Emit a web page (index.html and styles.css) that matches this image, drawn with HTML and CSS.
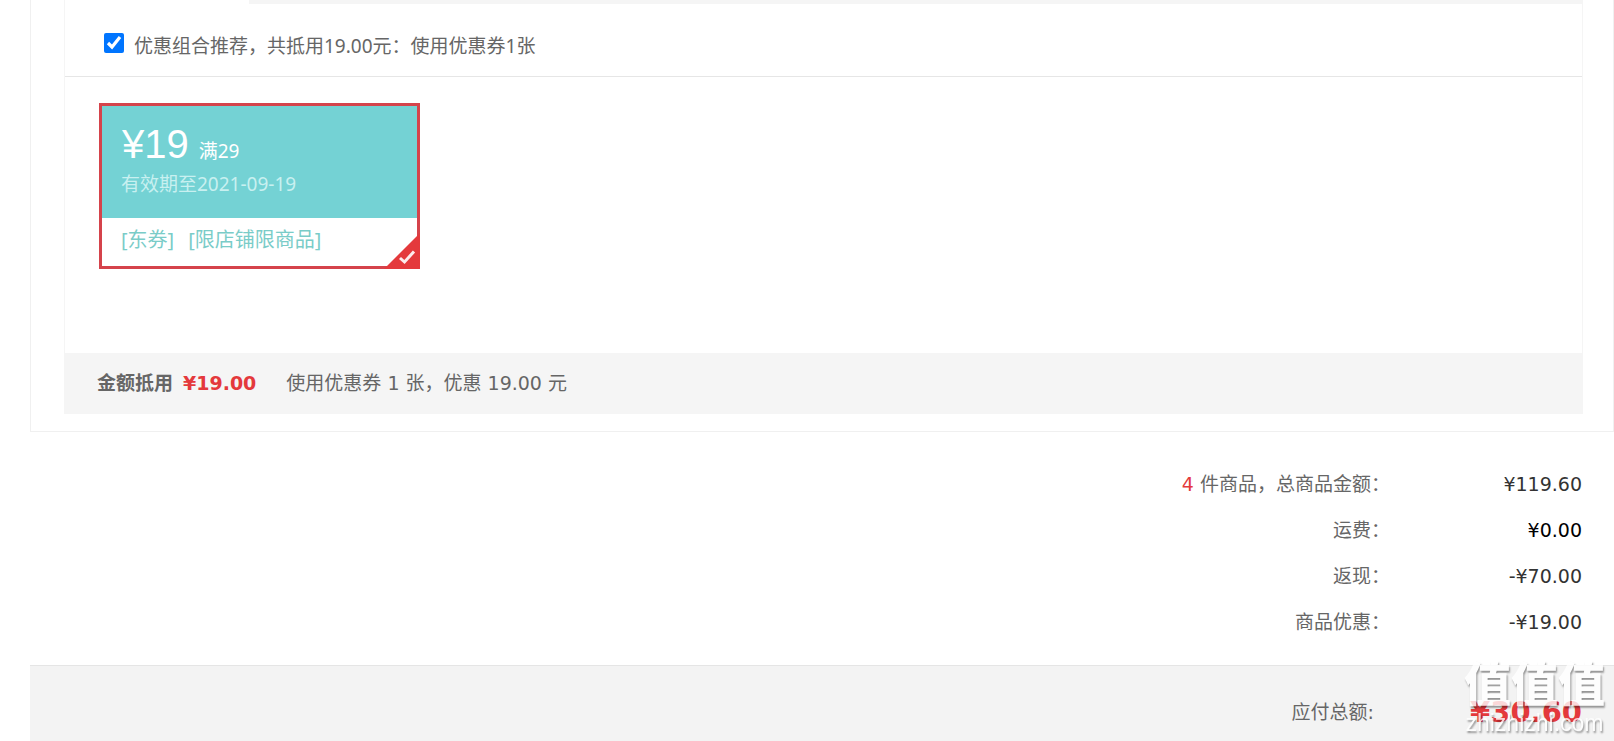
FILE: index.html
```html
<!DOCTYPE html>
<html lang="zh-CN">
<head>
<meta charset="utf-8" />
<title>结算页</title>
<meta name="viewport" content="width=device-width,initial-scale=1.0"/>
<link rel="stylesheet" href="styles.css">
</head>
<body>

<div class="virtual-box">
<div class="coupon-panel">
<div class="tab-line"></div>

<div class="recommend">
<input type="checkbox" id="best_coupon" checked />
<label for="best_coupon">优惠组合推荐，共抵用19.00元：使用优惠券1张</label>
</div>

<div class="coupon-list">
<div class="coupon">
<div class="coupon-top">
<div class="price"><strong>¥19</strong><span>满29</span></div>
<div class="date">有效期至2021-09-19</div>
</div>
<div class="coupon-type"><span>[东券]</span><span>[限店铺限商品]</span></div>
<svg class="selected" viewBox="0 0 36 36">
<path d="M36 0V36H0Z" fill="#e4393c"/>
<path d="M16 25L20.500 29L30 18.500" fill="none" stroke="#fff" stroke-opacity="0.900" stroke-width="3"/>
</svg>
</div>
</div>

<div class="coupon-total">
<b>金额抵用</b>
<b class="red">¥19.00</b>
<span class="used">使用优惠券 1 张，优惠 19.00 元</span>
</div>
</div>
</div>

<dl class="order-summary">
<div class="line"><dt><em>4</em> 件商品，总商品金额：</dt><dd>¥119.60</dd></div>
<div class="line"><dt>运费：</dt><dd class="freight">¥0.00</dd></div>
<div class="line"><dt>返现：</dt><dd>-¥70.00</dd></div>
<div class="line"><dt>商品优惠：</dt><dd>-¥19.00</dd></div>
</dl>

<div class="pay-bar">
<span class="pay-label">应付总额:</span>
<strong class="pay-price">¥30.60</strong>
</div>

<div class="watermark">
<div class="wm-name">值值值</div>
<div class="wm-url">zhizhizhi.com</div>
</div>

</body>
</html>
```
FILE: styles.css
```css
* {
     box-sizing:border-box;
}
body {
     margin:0;
     padding-left:30px;
     min-height:100vh;
     display:flex;
     flex-direction:column;
     font:400 19px/24px "Noto Sans","Noto Sans CJK SC",sans-serif;
     color:#666666;
     background:#ffffff;
}

/* coupons */
.virtual-box {
     padding:0 30px 17px 33px;
     border:1px solid #f0f0f0;
     border-top:0;
}
.coupon-panel {
     border:1px solid #f5f5f5;
     border-width:0 1px;
}
.tab-line {
     height:4px;
     margin-left:184px;
     background:#f5f5f5;
}
.recommend {
     display:flex;
     align-items:center;
     gap:10px;
     height:73px;
     padding:12px 0 0 39px;
     border-bottom:1px solid #e6e6e6;
}
.recommend input {
     width:20px;
     height:20px;
     margin:0 0 6px;
}
.coupon-list {
     height:276px;
     padding:26px 34px;
}
.coupon {
     position:relative;
     width:321px;
     border:3px solid #d5434b;
     background:#ffffff;
}
.coupon-top {
     height:112px;
     padding:15px 19px;
     color:#ffffff;
     background:#74d2d4;
}
.price {
     display:flex;
     align-items:baseline;
     gap:10px;
     height:51px;
     padding-left:1px;
     line-height:46px;
}
.price strong {
     font-family:"Liberation Sans",Arial,sans-serif;
     font-size:40px;
     font-weight:400;
}
.date {
     color:#c8f0f0;
}
.coupon-type {
     display:flex;
     gap:14px;
     height:48px;
     padding:10px 19px;
     font-size:20px;
     color:#7accc8;
}
.selected {
     position:absolute;
     right:-3px;
     bottom:-3px;
     width:36px;
     height:36px;
}
.coupon-total {
     display:flex;
     align-items:center;
     gap:10px;
     height:61px;
     padding:0 32px 2px;
     font-family:"DejaVu Sans",Verdana,"Noto Sans CJK SC",sans-serif;
     background:#f5f5f5;
}
.coupon-total b {
     font-weight:700;
}
.red {
     color:#e4393c;
}
.used {
     margin-left:20px;
}

/* amounts */
.order-summary {
     margin:0;
     padding:29px 32px 20px 0;
     font-family:"DejaVu Sans",Verdana,"Noto Sans CJK SC",sans-serif;
     line-height:46px;
     text-align:right;
}
.line {
     display:flex;
     justify-content:flex-end;
}
.line em {
     font-style:normal;
     color:#e4393c;
}
.line dd {
     width:192px;
     margin:0;
     color:#333333;
}
.line .freight {
     color:#000000;
}
.pay-bar {
     display:flex;
     flex:1;
     align-items:center;
     justify-content:flex-end;
     padding:16px 32px 0 0;
     border-top:1px solid #e5e5e5;
     font-family:"DejaVu Sans",Verdana,"Noto Sans CJK SC",sans-serif;
     background:#f3f3f3;
}
.pay-price {
     width:208px;
     font-size:29px;
     font-weight:700;
     line-height:32px;
     text-align:right;
     color:#e4393c;
}

.watermark {
     position:fixed;
     right:9px;
     bottom:5px;
     font-family:"Liberation Sans","Noto Sans CJK SC",sans-serif;
     text-align:center;
     color:#ffffff;
     text-shadow:1px 2px 2px rgba(0,0,0,0.5);
     opacity:0.8;
     pointer-events:none;
}
.wm-name {
     font-size:47px;
     font-weight:900;
     line-height:50px;
}
.wm-url {
     font-size:23px;
     font-weight:400;
     line-height:26px;
}
```
